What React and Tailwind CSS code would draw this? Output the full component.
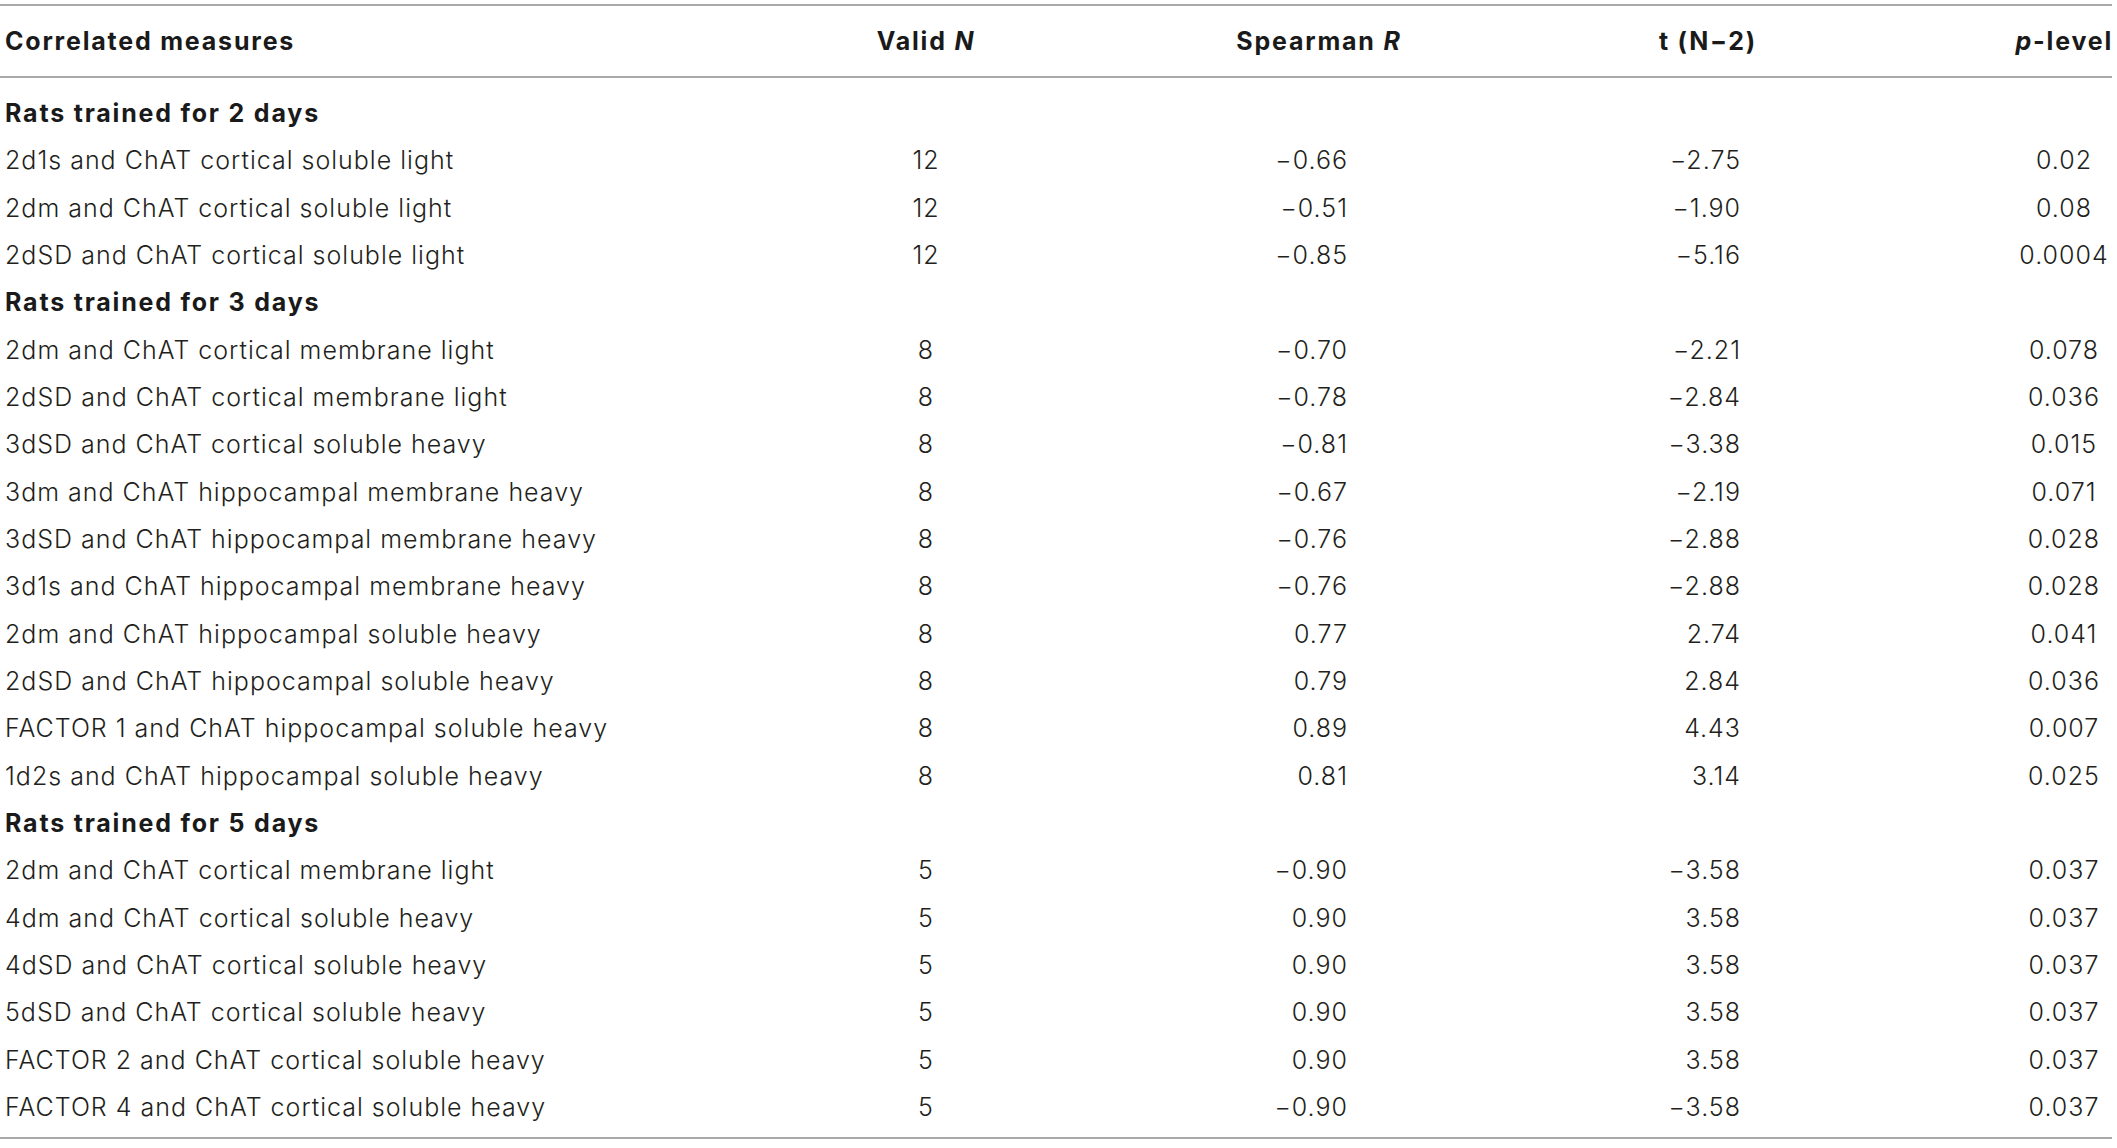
const sections = [
  {
    title: "Rats trained for 2 days",
    rows: [
      ["2d1s and ChAT cortical soluble light", "12", "−0.66", "−2.75", "0.02"],
      ["2dm and ChAT cortical soluble light", "12", "−0.51", "−1.90", "0.08"],
      ["2dSD and ChAT cortical soluble light", "12", "−0.85", "−5.16", "0.0004"],
    ],
  },
  {
    title: "Rats trained for 3 days",
    rows: [
      ["2dm and ChAT cortical membrane light", "8", "−0.70", "−2.21", "0.078"],
      ["2dSD and ChAT cortical membrane light", "8", "−0.78", "−2.84", "0.036"],
      ["3dSD and ChAT cortical soluble heavy", "8", "−0.81", "−3.38", "0.015"],
      ["3dm and ChAT hippocampal membrane heavy", "8", "−0.67", "−2.19", "0.071"],
      ["3dSD and ChAT hippocampal membrane heavy", "8", "−0.76", "−2.88", "0.028"],
      ["3d1s and ChAT hippocampal membrane heavy", "8", "−0.76", "−2.88", "0.028"],
      ["2dm and ChAT hippocampal soluble heavy", "8", "0.77", "2.74", "0.041"],
      ["2dSD and ChAT hippocampal soluble heavy", "8", "0.79", "2.84", "0.036"],
      ["FACTOR 1 and ChAT hippocampal soluble heavy", "8", "0.89", "4.43", "0.007"],
      ["1d2s and ChAT hippocampal soluble heavy", "8", "0.81", "3.14", "0.025"],
    ],
  },
  {
    title: "Rats trained for 5 days",
    rows: [
      ["2dm and ChAT cortical membrane light", "5", "−0.90", "−3.58", "0.037"],
      ["4dm and ChAT cortical soluble heavy", "5", "0.90", "3.58", "0.037"],
      ["4dSD and ChAT cortical soluble heavy", "5", "0.90", "3.58", "0.037"],
      ["5dSD and ChAT cortical soluble heavy", "5", "0.90", "3.58", "0.037"],
      ["FACTOR 2 and ChAT cortical soluble heavy", "5", "0.90", "3.58", "0.037"],
      ["FACTOR 4 and ChAT cortical soluble heavy", "5", "−0.90", "−3.58", "0.037"],
    ],
  },
];

const grid = "grid grid-cols-[826px_200px_586px_192px_308px] items-center";

function DataRow({ row }) {
  const [label, n, r, t, p] = row;
  return (
    <div className={`${grid} h-[47.33px] text-[#231f20] font-light tracking-[1px]`}>
      <div className="pl-[5px]">{label}</div>
      <div className="text-center">{n}</div>
      <div className="text-right pr-[264px]">{r}</div>
      <div className="text-right pr-[63px]">{t}</div>
      <div className="flex justify-end">
        <span className="w-[96px] text-center">{p}</span>
      </div>
    </div>
  );
}

export default function App() {
  return (
    <div className="w-[2117px] h-[1148px] bg-white pt-[4px] font-['Inter','Liberation_Sans',sans-serif] text-[25px] leading-none">
      <div className="w-[2112px] border-y-2 border-[#a9a9a9]">
        <div className={`${grid} h-[72px] border-b-2 border-[#a9a9a9] font-bold text-[#1a1a1a] tracking-[1.8px]`}>
          <div className="pl-[5px]">Correlated measures</div>
          <div className="text-center">
            Valid <i>N</i>
          </div>
          <div className="text-center">
            Spearman <i>R</i>
          </div>
          <div className="text-center">t (N−2)</div>
          <div className="text-right mr-[-1px]">
            <i>p</i>-level
          </div>
        </div>
        <div className="pt-[12px] pb-[6px]">
          {sections.map((s) => (
            <div key={s.title}>
              <div className="h-[47.33px] flex items-center pl-[5px] font-bold text-[#1a1a1a] tracking-[1.8px]">
                {s.title}
              </div>
              {s.rows.map((row) => (
                <DataRow key={row[0]} row={row} />
              ))}
            </div>
          ))}
        </div>
      </div>
    </div>
  );
}
